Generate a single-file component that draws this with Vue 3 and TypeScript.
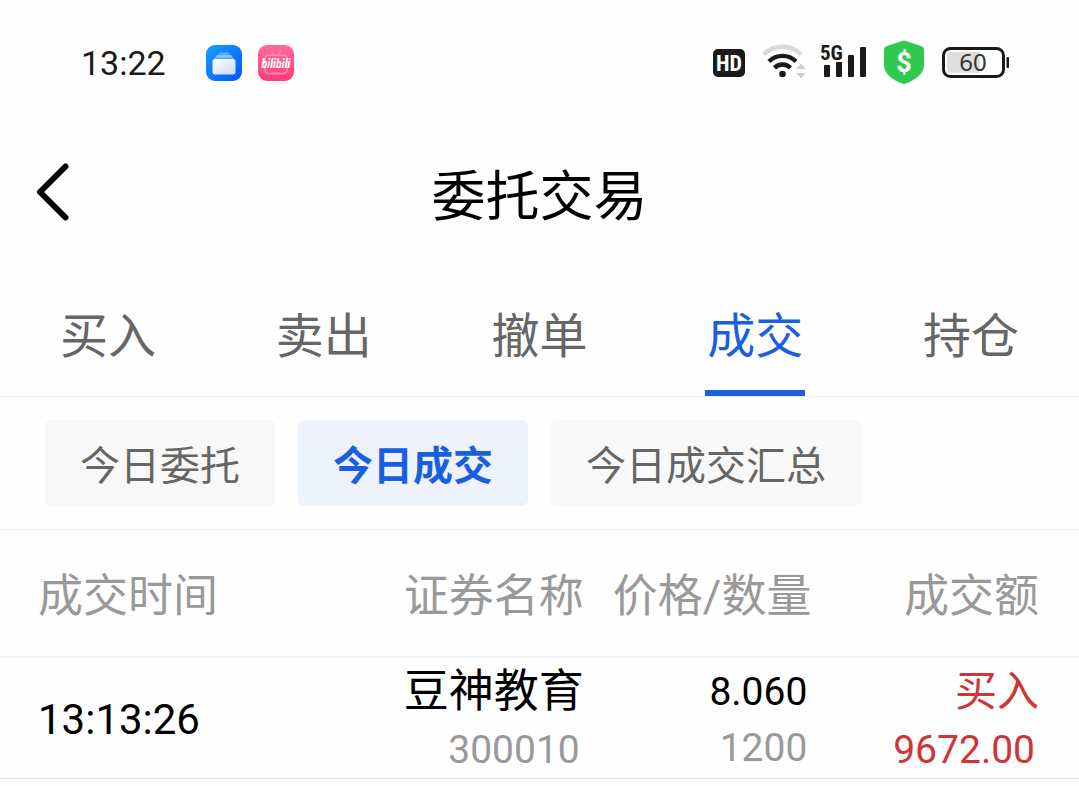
<script setup lang="ts">
import { ref } from 'vue'

interface Trade {
  time: string
  name: string
  code: string
  price: string
  quantity: string
  side: string
  amount: string
}

const tabs: string[] = ['买入', '卖出', '撤单', '成交', '持仓']
const filters: string[] = ['今日委托', '今日成交', '今日成交汇总']
const activeTab = ref('成交')
const activeFilter = ref('今日成交')

const trades: Trade[] = [
  { time: '13:13:26', name: '豆神教育', code: '300010', price: '8.060', quantity: '1200', side: '买入', amount: '9672.00' },
]
</script>

<template>
  <div class="screen">
    <div class="status">
      <div class="status-left">
        <time class="clock">13:22</time>
        <svg class="app-icon" viewBox="0 0 36 36" aria-hidden="true">
          <defs>
            <linearGradient id="files-bg" x1="0" y1="0" x2="1" y2="1">
              <stop offset="0" stop-color="#12a0ff" />
              <stop offset="1" stop-color="#0a55f5" />
            </linearGradient>
            <linearGradient id="files-card" x1="0" y1="0" x2="1" y2="1">
              <stop offset="0" stop-color="#ffffff" />
              <stop offset="1" stop-color="#c8dcff" />
            </linearGradient>
          </defs>
          <rect width="36" height="36" rx="9" fill="url(#files-bg)" />
          <path d="M13.500 7.500h9l1.500 2H12z" fill="#6ab8ff" />
          <path d="M11 10h14l1.500 2h-17z" fill="#8fc8ff" />
          <path d="M9.500 12.500h17q1 0 1.500 1h-20q.5-1 1.500-1z" fill="#b9dcff" />
          <rect x="6.500" y="14" width="23" height="15.500" rx="2.500" fill="url(#files-card)" />
        </svg>
        <svg class="app-icon" viewBox="0 0 36 36" aria-hidden="true">
          <defs>
            <linearGradient id="video-bg" x1="0" y1="0" x2="0" y2="1">
              <stop offset="0" stop-color="#ff6a9c" />
              <stop offset="1" stop-color="#ff3d77" />
            </linearGradient>
          </defs>
          <rect width="36" height="36" rx="9" fill="url(#video-bg)" />
          <g fill="none" stroke="#ff86ac" stroke-width="1.800" stroke-linecap="round">
            <rect x="7" y="10" width="22" height="18.500" rx="4" />
            <path d="M13 6l3 4M23 6l-3 4" />
          </g>
          <text x="18" y="23" text-anchor="middle" class="video-word">bilibili</text>
        </svg>
      </div>

      <div class="status-right">
        <svg width="32" height="28" viewBox="0 0 32 28" role="img" aria-label="HD">
          <rect width="32" height="28" rx="5" fill="#1a1a1a" />
          <text x="16" y="22" text-anchor="middle" class="hd-word">HD</text>
        </svg>
        <svg width="44" height="36" viewBox="-1 2 44 36" role="img" aria-label="Wi-Fi">
          <g fill="none" stroke-width="4.400">
            <path d="M1.700 11.500a26.500 26.500 0 0 1 37.600 0" stroke="#d9d9d9" />
            <path d="M7 18.500a19 19 0 0 1 27 0" stroke="#1a1a1a" />
            <path d="M12.500 24.800a11.500 11.500 0 0 1 16 0" stroke="#1a1a1a" />
          </g>
          <circle cx="20.500" cy="31" r="3.300" fill="#1a1a1a" />
          <path d="M39 20.500l5 5.500H34zM34 30h10l-5 5.500z" fill="#d0d0d0" />
        </svg>
        <svg width="47" height="36" viewBox="0 0 47 36" role="img" aria-label="5G">
          <text x="-1" y="15" class="net-word">5G</text>
          <g fill="#1a1a1a">
            <rect x="3" y="20" width="6" height="12" rx="1" />
            <rect x="15" y="17" width="6" height="15" rx="1" />
            <rect x="27" y="10" width="6" height="22" rx="1" />
            <rect x="39" y="2" width="6" height="30" rx="1" />
          </g>
        </svg>
        <svg width="40" height="44" viewBox="0 1 40 44" role="img" aria-label="$">
          <path d="M18 1q2-1 4 0l15 5q3 1 3 4v15c0 9-8 14-17.500 18.300q-2.500 1.200-5 0C8 39 0 34 0 25V10q0-3 3-4z" fill="#2fc94f" />
          <text x="20" y="32" text-anchor="middle" class="coin-word">$</text>
        </svg>
        <svg class="battery" width="67" height="32" viewBox="0 0 67 32" role="img" aria-label="60%">
          <rect x="1.500" y="1.500" width="60" height="28" rx="7" fill="#fff" stroke="#1a1a1a" stroke-width="3" />
          <path d="M8 5h30v21H8q-3 0-3-3V8q0-3 3-3z" fill="#dedede" />
          <rect x="64.500" y="10" width="2.500" height="11" rx="1" fill="#1a1a1a" />
          <text x="31" y="24" text-anchor="middle" class="battery-word">60</text>
        </svg>
      </div>
    </div>

    <header class="nav">
      <button class="back" type="button" aria-label="返回">
        <svg width="34" height="58" viewBox="0 0 34 58" aria-hidden="true">
          <path d="M29.500 3.500L4 29l25.500 25.500" fill="none" stroke="#000" stroke-width="6" stroke-linecap="round" stroke-linejoin="round" />
        </svg>
      </button>
      <h1 class="title">委托交易</h1>
    </header>

    <nav class="tabs">
      <button
        v-for="tab in tabs"
        :key="tab"
        type="button"
        class="tab"
        :class="{ active: tab === activeTab }"
        @click="activeTab = tab"
      >
        <span class="tab-label">{{ tab }}</span>
      </button>
    </nav>

    <div class="filters">
      <button
        v-for="item in filters"
        :key="item"
        type="button"
        class="chip"
        :class="{ active: item === activeFilter }"
        @click="activeFilter = item"
      >
        {{ item }}
      </button>
    </div>

    <table class="trades">
      <colgroup>
        <col class="col-time" />
        <col class="col-name" />
        <col class="col-price" />
        <col />
      </colgroup>
      <thead>
        <tr>
          <th scope="col">成交时间</th>
          <th scope="col">证券名称</th>
          <th scope="col">价格/数量</th>
          <th scope="col">成交额</th>
        </tr>
      </thead>
      <tbody>
        <tr v-for="trade in trades" :key="trade.time">
          <td class="time">{{ trade.time }}</td>
          <td>
            <div class="name">{{ trade.name }}</div>
            <div class="number muted">{{ trade.code }}</div>
          </td>
          <td>
            <div class="number">{{ trade.price }}</div>
            <div class="number muted">{{ trade.quantity }}</div>
          </td>
          <td class="red">
            <div class="side">{{ trade.side }}</div>
            <div class="number">{{ trade.amount }}</div>
          </td>
        </tr>
      </tbody>
    </table>
  </div>
</template>

<style>
body {
  margin: 0;
  background: #fefefe;
}
</style>

<style scoped>
.screen {
  font-family: Roboto, "Noto Sans CJK SC", sans-serif;
  color: #000;
  background: #fefefe;
}

button {
  margin: 0;
  padding: 0;
  border: 0;
  background: none;
  font: inherit;
  color: inherit;
  cursor: pointer;
}

svg {
  display: block;
  overflow: visible;
}

.status {
  box-sizing: border-box;
  display: flex;
  justify-content: space-between;
  align-items: center;
  height: 124px;
  padding: 2px 70px 0 81px;
}

.status-left,
.status-right {
  display: flex;
  align-items: center;
  gap: 16px;
}

.clock {
  margin-right: 24px;
  font-size: 34px;
  line-height: 40px;
  color: #1a1a1a;
}

.app-icon {
  width: 36px;
  height: 36px;
}

.video-word {
  font: italic 700 12px "Roboto Condensed", "Liberation Sans Narrow", sans-serif;
  fill: #fff;
}

.hd-word {
  font: 700 22px "Roboto Condensed", "Liberation Sans Narrow", sans-serif;
  fill: #fff;
}

.net-word {
  font: 700 21px "Roboto Condensed", "Liberation Sans Narrow", sans-serif;
  fill: #1a1a1a;
}

.coin-word {
  font: 700 27px Roboto, sans-serif;
  fill: #fff;
}

.battery {
  margin-left: 2px;
}

.battery-word {
  font: 400 24px "Noto Sans", sans-serif;
  fill: #333;
}

.nav {
  display: grid;
  grid-template-columns: 1fr auto 1fr;
  align-items: center;
  height: 136px;
  padding: 0 36px;
}

.back {
  justify-self: start;
}

.title {
  margin: 0;
  padding-top: 12px;
  font-size: 54px;
  line-height: 64px;
  font-weight: 400;
}

.tabs {
  display: flex;
  height: 136px;
  border-bottom: 1px solid #eee;
}

.tab {
  display: flex;
  flex: 1;
  justify-content: center;
  font-size: 48px;
  line-height: 60px;
  color: #666;
}

.tab-label {
  box-sizing: border-box;
  height: 136px;
  padding: 47px 2px 0;
  border-bottom: 6px solid transparent;
}

.tab.active {
  color: #1a5fe0;
}

.tab.active .tab-label {
  border-color: #1a5fe0;
}

.filters {
  display: flex;
  gap: 23px;
  padding: 23px 45px;
  border-bottom: 1px solid #f0f0f0;
}

.chip {
  height: 86px;
  padding: 8px 35px 0;
  border-radius: 6px;
  background: #f8f8f8;
  font-size: 40px;
  line-height: 50px;
  color: #666;
}

.chip.active {
  background: #edf2fd;
  font-weight: 700;
  color: #1a5fe0;
}

.trades {
  width: 100%;
  table-layout: fixed;
  border-collapse: separate;
  border-spacing: 0;
}

.col-time {
  width: 36.1%;
}

.col-name {
  width: 18%;
}

.col-price {
  width: 21.1%;
}

th,
td {
  padding: 0;
  text-align: right;
  font-weight: 400;
  white-space: nowrap;
}

th {
  height: 118px;
  padding-top: 8px;
  border-bottom: 2px solid #f1f2f5;
  font-size: 45px;
  line-height: 60px;
  color: #999;
}

td {
  height: 116px;
  padding-top: 4px;
  border-bottom: 1px solid #e4e4e4;
}

th:first-child,
td:first-child {
  padding-left: 38px;
  text-align: left;
}

th:last-child,
td:last-child {
  padding-right: 40px;
}

.time {
  padding-top: 2px;
  font-size: 42px;
}

.name {
  font-size: 45px;
  line-height: 60px;
}

.side {
  font-size: 42px;
  line-height: 60px;
}

.number {
  padding-right: 4px;
  font-size: 39px;
  line-height: 56px;
}

.muted {
  color: #999;
}

.red {
  color: #d03438;
}
</style>
